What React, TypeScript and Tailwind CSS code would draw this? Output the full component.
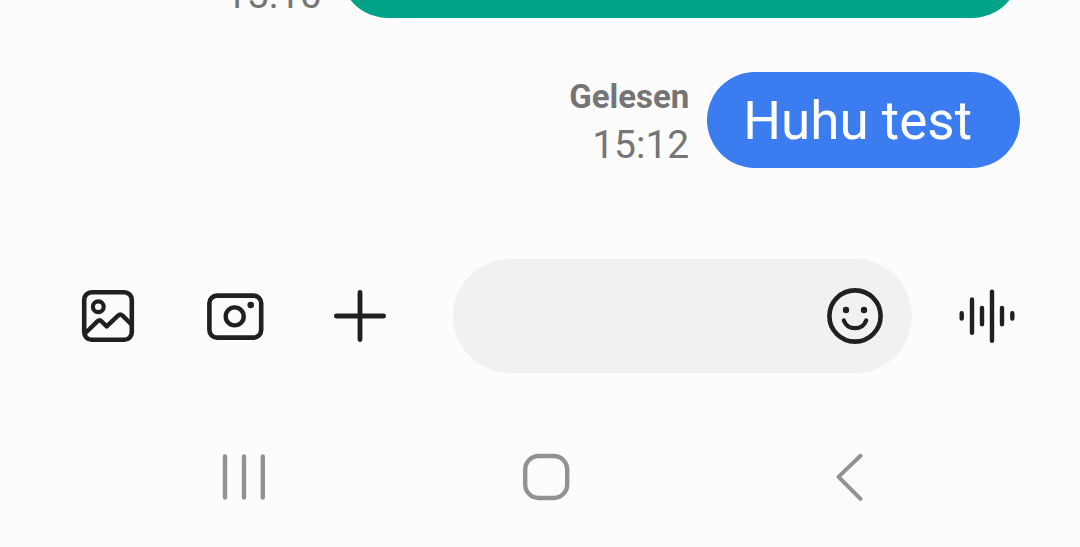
import { useState } from 'react';
import type { ReactNode } from 'react';

interface IconButtonProps {
  label: string;
  children: ReactNode;
}

function IconButton({ label, children }: IconButtonProps) {
  return (
    <button type="button" aria-label={label} className="size-14 shrink-0 text-[#202020]">
      <svg viewBox="0 0 56 56" fill="none" stroke="currentColor" strokeLinecap="round" strokeLinejoin="round" className="size-14 overflow-visible">
        {children}
      </svg>
    </button>
  );
}

function NavButton({ label, children }: IconButtonProps) {
  return (
    <button type="button" aria-label={label} className="size-12 shrink-0 text-[#929292]">
      <svg viewBox="0 0 48 48" fill="none" stroke="currentColor" strokeWidth="4.4" strokeLinecap="round" strokeLinejoin="round" className="size-12">
        {children}
      </svg>
    </button>
  );
}

export default function App() {
  const [message, setMessage] = useState('');

  return (
    <div className="min-h-screen bg-[#fcfcfc] font-[Roboto,sans-serif] text-[#757575]">
      {/* Messages */}
      <main className="pr-15">
        {/* Older message, scrolled out at the top */}
        <div className="flex h-[18px] items-end justify-end gap-[18px] overflow-hidden">
          <time className="text-[39px] leading-[46px]">15:10</time>
          <div className="h-24 w-2/3 shrink-0 rounded-full bg-[#00a388]" />
        </div>

        <div className="mt-[54px] flex items-end justify-end gap-[18px]">
          <div className="flex flex-col items-end">
            <span className="text-[33px] leading-[50px] font-bold">Gelesen</span>
            <time className="text-[39px] leading-[46px]">15:12</time>
          </div>
          <p className="flex h-24 items-center rounded-full bg-[#3b7cf1] pt-1 pr-12 pl-9 text-[53px] text-white">Huhu test</p>
        </div>
      </main>

      {/* Composer */}
      <form className="mt-[91px] flex items-center pr-[65px] pl-20" onSubmit={(e) => e.preventDefault()}>
        <div className="flex gap-[71px]">
          <IconButton label="Galerie">
            <rect x="4.2" y="4.2" width="47.6" height="47.6" rx="7.5" strokeWidth="4.6" />
            <circle cx="18.3" cy="18.8" r="5.4" strokeWidth="4.2" />
            <path d="M6 44.5 17.6 33.2q1.9-1.7 3.8 0l5.3 5.2L38.3 27.4q2-1.8 4 0l9 8.8" strokeWidth="4.4" />
          </IconButton>
          <IconButton label="Kamera">
            <rect x="2.4" y="7.6" width="51.8" height="42" rx="7.5" strokeWidth="4.6" />
            <circle cx="27.7" cy="28.4" r="9" strokeWidth="4.4" />
            <circle cx="43.7" cy="17" r="3.3" fill="currentColor" stroke="none" />
          </IconButton>
          <IconButton label="Mehr">
            <path d="M26 4.4v47.2M2.4 28h47.2" strokeWidth="4.8" />
          </IconButton>
        </div>

        <div className="mr-[47px] ml-[63px] flex h-[114px] min-w-0 flex-1 items-center rounded-full bg-[#f1f1f1] pr-[29px] pl-12">
          <input
            type="text"
            aria-label="Nachricht"
            value={message}
            onChange={(e) => setMessage(e.target.value)}
            className="h-full min-w-0 flex-1 bg-transparent text-[44px] text-[#202020] outline-none"
          />
          <IconButton label="Emoji">
            <circle cx="28" cy="28" r="25.6" strokeWidth="4.6" />
            <circle cx="19" cy="22" r="3.2" fill="currentColor" stroke="none" />
            <circle cx="37" cy="22" r="3.2" fill="currentColor" stroke="none" />
            <path d="M16.8 32.4c1.9 4.9 6.2 7.8 11.2 7.8s9.3-2.9 11.2-7.8" strokeWidth="4.2" />
          </IconButton>
        </div>

        <IconButton label="Sprachnachricht">
          <path d="M2.7 25.2v5.3M13 11.5v33.3M23 20v16.2M33 3.6v49.2M43 20v16.2M53.3 25.2v5.3" strokeWidth="4.4" />
        </IconButton>
      </form>

      {/* System navigation */}
      <nav className="mt-20 flex justify-between pr-[207px] pl-[220px]">
        <NavButton label="Letzte Apps">
          <path d="M5 3.4v41.2M24 3.4v41.2M42.8 3.4v41.2" />
        </NavButton>
        <NavButton label="Startbildschirm">
          <rect x="2.2" y="3" width="42" height="42" rx="13.5" />
        </NavButton>
        <NavButton label="Zurück">
          <path d="M35.5 2.8 13.5 23.9l22 21.9" strokeWidth="4" />
        </NavButton>
      </nav>
    </div>
  );
}
